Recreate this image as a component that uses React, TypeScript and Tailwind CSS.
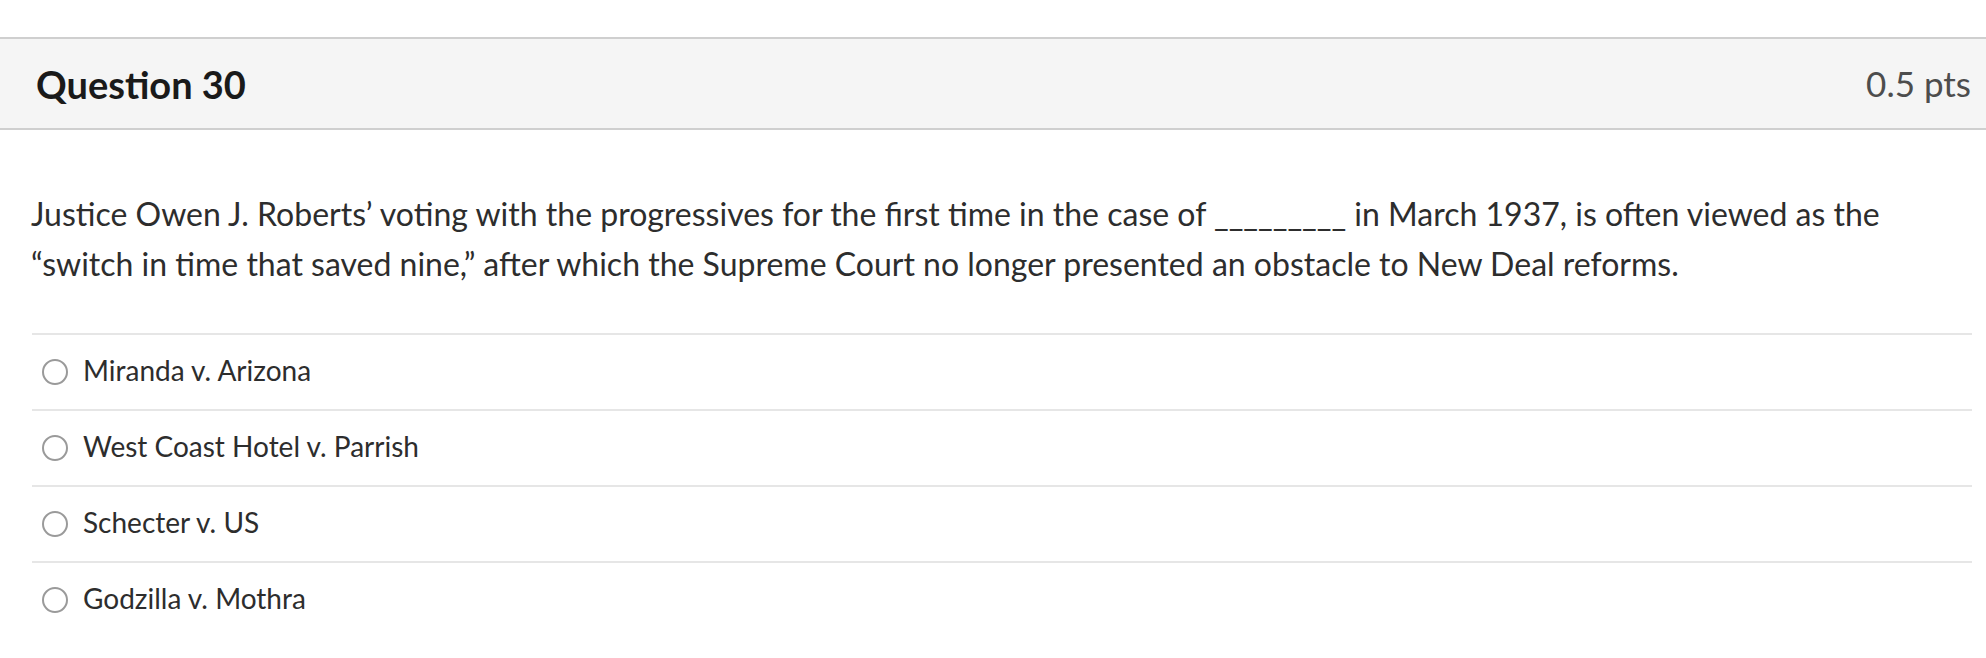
import React from 'react';

const answers = [
  'Miranda v. Arizona',
  'West Coast Hotel v. Parrish',
  'Schecter v. US',
  'Godzilla v. Mothra',
];

function Radio() {
  return (
    <span className="inline-block w-[26px] h-[26px] rounded-full border-2 border-[#9a9a9a] bg-white shrink-0" />
  );
}

export default function App() {
  return (
    <div
      className="w-full min-h-[658px] bg-white pt-[37px] text-[#2d2d2d]"
      style={{ fontFamily: 'Lato, "Liberation Sans", sans-serif' }}
    >
      {/* Question header */}
      <div className="flex items-center justify-between h-[93px] bg-[#f5f5f5] border-y-2 border-[#cfcfcf] pl-[36px] pr-[15px]">
        <h2 className="text-[38px] font-bold text-[#1a1a1a] leading-none">Question 30</h2>
        <span className="text-[35px] text-[#4d4d4d] leading-none">0.5 pts</span>
      </div>

      {/* Question text */}
      <div className="pl-[31px] pr-[20px] pt-[59px]">
        <p className="text-[32px] leading-[50px]">
          Justice Owen J. Roberts’ voting with the progressives for the first time in the case of _________ in March
          1937, is often viewed as the “switch in time that saved nine,” after which the Supreme Court no longer
          presented an obstacle to New Deal reforms.
        </p>
      </div>

      {/* Answers */}
      <div className="ml-[32px] mr-[14px] mt-[44px]">
        {answers.map((a) => (
          <label
            key={a}
            className="flex items-center gap-[15px] h-[76px] border-t-2 border-[#e6e6e6] pl-[10px]"
          >
            <Radio />
            <span className="text-[28px] leading-none pb-[4px] text-[#2d2d2d]">{a}</span>
          </label>
        ))}
      </div>
    </div>
  );
}
